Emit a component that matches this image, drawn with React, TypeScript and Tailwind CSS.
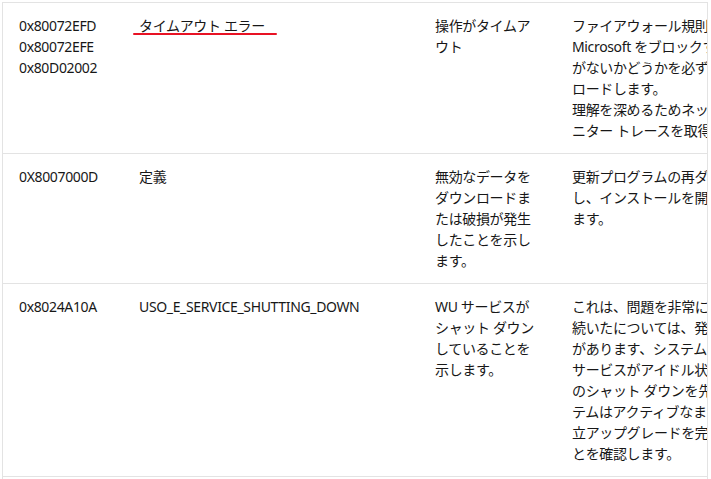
import React from "react";

type Row = {
  codes: string[];
  name: string;
  desc: string[];
  fix: string[];
  underline?: boolean;
};

const rows: Row[] = [
  {
    codes: ["0x80072EFD", "0x80072EFE", "0x80D02002"],
    name: "タイムアウト エラー",
    desc: ["操作がタイムア", "ウト"],
    fix: [
      "ファイアウォール規則またはプロキシで",
      "Microsoft をブロックするダウンロード URL",
      "がないかどうかを必ず確認してからダウン",
      "ロードします。",
      "理解を深めるためネットワーク モ",
      "ニター トレースを取得します。",
    ],
    underline: true,
  },
  {
    codes: ["0X8007000D"],
    name: "定義",
    desc: ["無効なデータを", "ダウンロードま", "たは破損が発生", "したことを示し", "ます。"],
    fix: ["更新プログラムの再ダウンロードを試行", "し、インストールを開始しようとし", "ます。"],
  },
  {
    codes: ["0x8024A10A"],
    name: "USO_E_SERVICE_SHUTTING_DOWN",
    desc: ["WU サービスが", "シャット ダウン", "していることを", "示します。"],
    fix: [
      "これは、問題を非常に長い間アイドル状態が",
      "続いたについては、発生する可能性",
      "があります、システムが更新中に",
      "サービスがアイドル状態になって WU",
      "のシャット ダウンを先送りできます。シス",
      "テムはアクティブなままで、更新プログラムの独",
      "立アップグレードを完了できるようにするこ",
      "とを確認します。",
    ],
  },
];

export default function App() {
  return (
    <div
      className="min-h-screen bg-white pl-[2px] pt-[2px] text-[14px] leading-[21px] tracking-[-0.35px] text-[#171717]"
      style={{ fontFamily: '"Noto Sans", "Noto Sans CJK JP", sans-serif' }}
    >
      <div className="h-[477px] w-[706px] overflow-hidden border-l border-r border-[#e3e3e3]">
        <table className="w-[813px] table-fixed border-collapse">
          <colgroup>
            <col className="w-[120px]" />
            <col className="w-[296px]" />
            <col className="w-[137px]" />
            <col className="w-[260px]" />
          </colgroup>
          <tbody>
            {rows.map((r, i) => (
              <tr key={i} className={`border-b border-[#e3e3e3] ${i === 0 ? "border-t" : ""}`}>
                <td className="px-4 pt-[12px] pb-[12px] align-top">
                  {r.codes.map((c) => (
                    <div key={c} className="whitespace-nowrap">
                      {c}
                    </div>
                  ))}
                </td>
                <td className="relative px-4 pt-[12px] pb-[12px] align-top">
                  <div className="whitespace-nowrap">{r.name}</div>
                  {r.underline && (
                    <div className="absolute left-[10px] top-[30px] h-[2px] w-[144px] rounded-full bg-[#e81224]" />
                  )}
                </td>
                <td className="px-4 pt-[12px] pb-[12px] align-top">
                  {r.desc.map((d, j) => (
                    <div key={j} className="whitespace-nowrap">
                      {d}
                    </div>
                  ))}
                </td>
                <td className="px-4 pt-[12px] pb-[12px] align-top">
                  {r.fix.map((d, j) => (
                    <div key={j} className="whitespace-nowrap">
                      {d}
                    </div>
                  ))}
                </td>
              </tr>
            ))}
          </tbody>
        </table>
      </div>
    </div>
  );
}
